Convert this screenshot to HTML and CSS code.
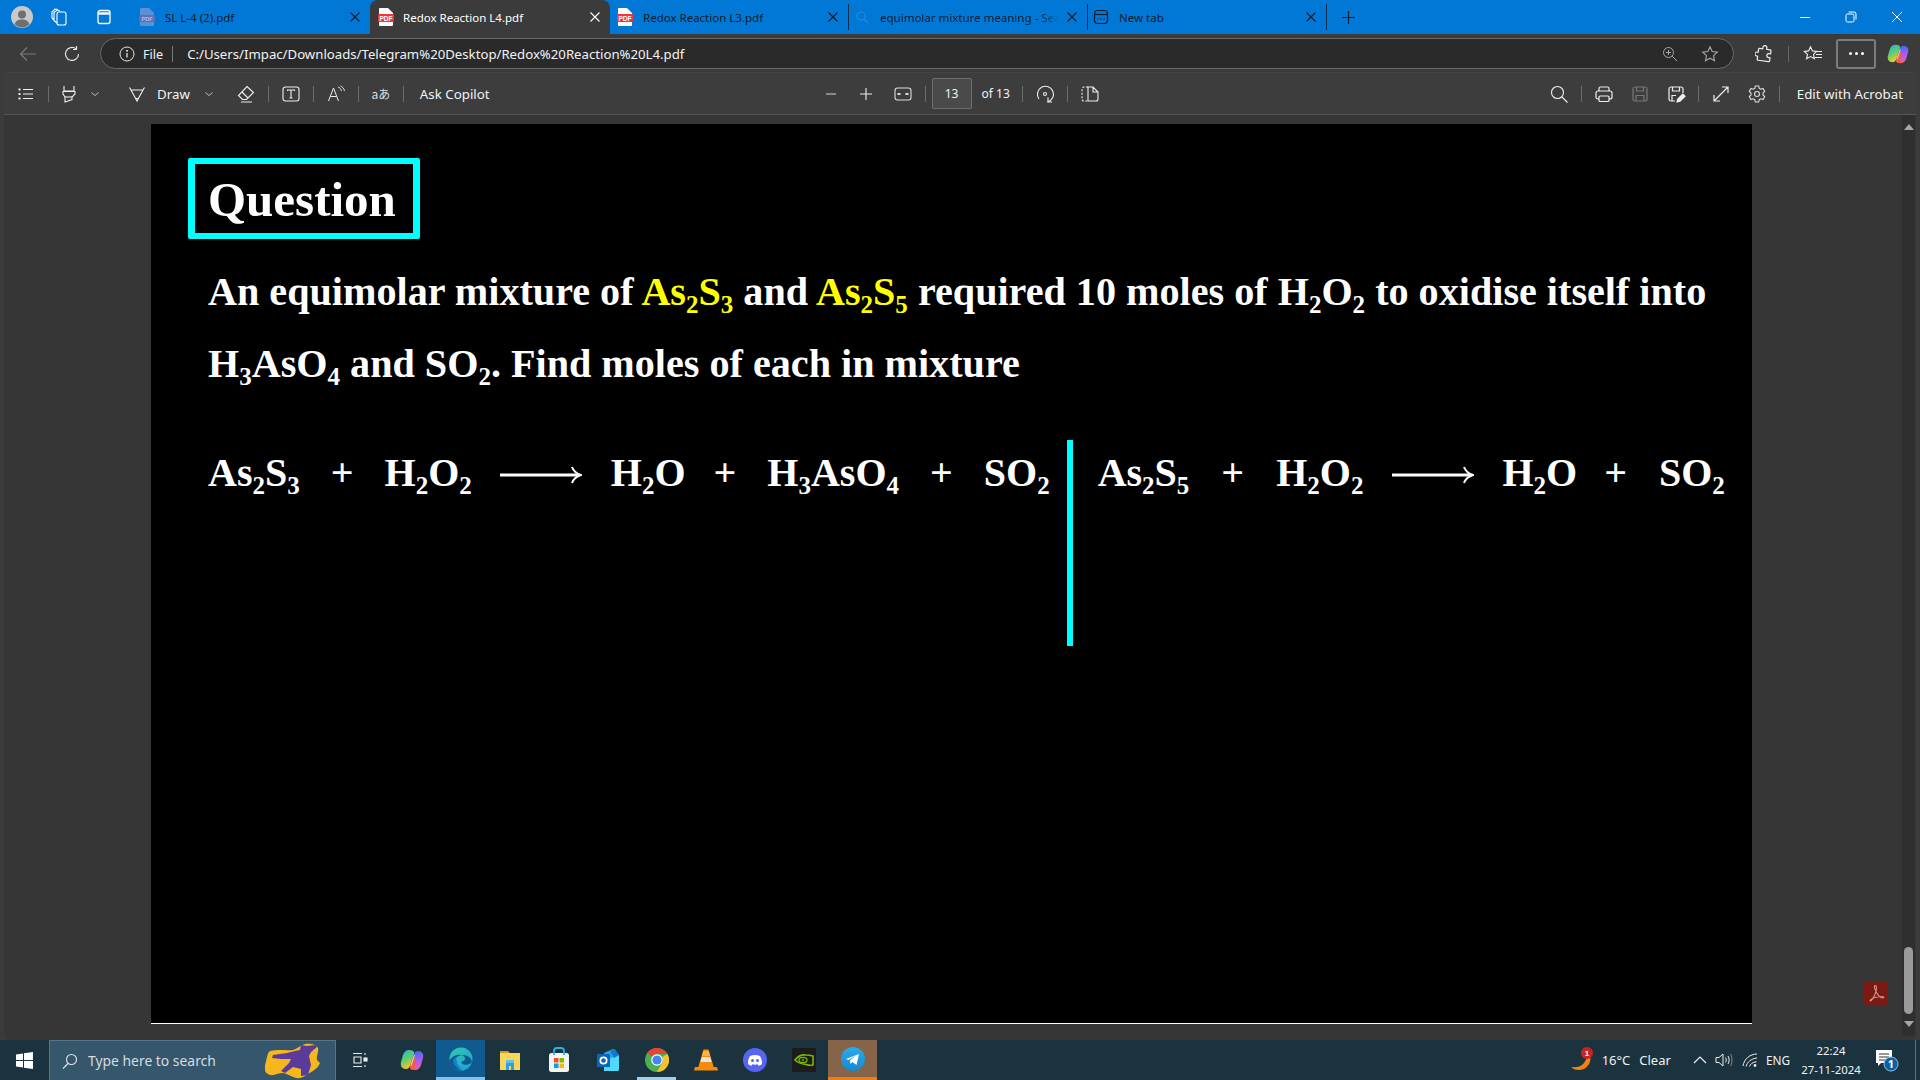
FILE: index.html
```html
<!DOCTYPE html>
<html lang="en">
<head>
<meta charset="utf-8">
<title>Redox Reaction L4.pdf</title>
<link rel="stylesheet" href="styles.css">
</head>
<body>
<svg class="defs" width="0" height="0">
  <defs>
    <symbol id="pdf" viewBox="0 0 16 18">
      <path d="M2 0h8l5 5v12a1 1 0 0 1-1 1H2a1 1 0 0 1-1-1V1a1 1 0 0 1 1-1z" fill="#fff"/>
      <rect x="0" y="6" width="16" height="8" rx="1" fill="#f0353b"/>
      <text x="8" y="12.6" text-anchor="middle" font-family="Liberation Sans" font-weight="700" font-size="6.6" fill="#fff">PDF</text>
    </symbol>
    <symbol id="x" viewBox="0 0 12 12"><path d="M1.5 1.5l9 9M10.5 1.5l-9 9" fill="none" stroke="currentColor" stroke-width="1.1"/></symbol>
    <symbol id="chev" viewBox="0 0 10 10"><path d="M1.5 3.5L5 6.5l3.5-3" fill="none" stroke="currentColor" stroke-width="1"/></symbol>
    <linearGradient id="cg1" x1="0" y1="0" x2=".4" y2="1"><stop offset="0" stop-color="#2aa8f0"/><stop offset=".55" stop-color="#5fd06a"/><stop offset="1" stop-color="#f5c52e"/></linearGradient>
    <linearGradient id="cg2" x1=".4" y1="0" x2=".6" y2="1"><stop offset="0" stop-color="#2f6ff0"/><stop offset=".5" stop-color="#a85cf0"/><stop offset="1" stop-color="#f060a0"/></linearGradient>
    <symbol id="copi" viewBox="0 0 24 24">
      <path d="M9 2C6 2 4 4 3 7l-2 7c-1 4 1 7 5 7 2 0 3-1 4-3l4-12c1-3-2-4-5-4z" fill="url(#cg1)"/>
      <path d="M15 22c3 0 5-2 6-5l2-7c1-4-1-7-5-7-2 0-3 1-4 3l-4 12c-1 3 2 4 5 4z" fill="url(#cg2)"/>
      <path d="M14 9c-2 3-3 6-4 9-1 3 2 4 5 4 1 0 2-.3 3-1-3 0-4-1-3.500-3.500L16 11z" fill="#f2603a"/>
      <path d="M14.500 7L11 17.500" stroke="#fff" stroke-opacity=".75" stroke-width="1"/>
    </symbol>
  </defs>
</svg>

<div class="tabstrip">
  <div class="strip-left">
    <svg class="avatar" width="22" height="22" viewBox="0 0 22 22"><circle cx="11" cy="11" r="11" fill="#c9c9c9"/><circle cx="11" cy="8.4" r="4" fill="#6f6f6f"/><path d="M3.600 18.600c1-4 4-5.200 7.400-5.200s6.400 1.200 7.400 5.200A11 11 0 0 1 3.600 18.600z" fill="#6f6f6f"/></svg>
    <svg class="strip-ic1" width="20" height="20" viewBox="0 0 20 20" fill="none" stroke="#fff" stroke-width="1.1"><rect x="8" y="5" width="9" height="13" rx="2"/><path d="M8 16l-3-2.500V5.500l3-2.500 3 1M5 13l-2-2V5l3-3 3 .5"/></svg>
    <svg class="strip-ic2" width="18" height="18" viewBox="0 0 18 18" fill="none" stroke="#fff" stroke-width="1.300"><rect x="3" y="2.500" width="12" height="13" rx="2"/><path d="M3 5.500h12" stroke-width="2.400"/></svg>
  </div>
  <div class="tab">
    <svg class="tab-icon" width="16" height="18" viewBox="0 0 16 18"><path d="M2 0h8l5 5v12a1 1 0 0 1-1 1H2a1 1 0 0 1-1-1V1a1 1 0 0 1 1-1z" fill="#5b8fd6"/><rect x="0" y="7" width="16" height="7" rx="1" fill="#5c6fb8"/><text x="8" y="12.500" text-anchor="middle" font-family="Liberation Sans" font-size="5.600" font-weight="700" fill="#a9c4ee">PDF</text></svg>
    <span class="tab-title">SL L-4 (2).pdf</span>
    <svg class="tab-x" width="12" height="12"><use href="#x"/></svg>
  </div>
  <div class="tab active">
    <svg class="tab-icon" width="16" height="18"><use href="#pdf"/></svg>
    <span class="tab-title">Redox Reaction L4.pdf</span>
    <svg class="tab-x" width="12" height="12"><use href="#x"/></svg>
  </div>
  <div class="tab">
    <svg class="tab-icon" width="16" height="18"><use href="#pdf"/></svg>
    <span class="tab-title">Redox Reaction L3.pdf</span>
    <svg class="tab-x" width="12" height="12"><use href="#x"/></svg>
  </div>
  <div class="tab sep-left">
    <svg class="tab-icon" width="16" height="16" viewBox="0 0 16 16" fill="none" stroke="#2a86d8" stroke-width="1.200"><circle cx="7" cy="7" r="4"/><path d="M10 10l4 4"/></svg>
    <span class="tab-title fade">equimolar mixture meaning - Sea</span>
    <svg class="tab-x" width="12" height="12"><use href="#x"/></svg>
  </div>
  <div class="tab sep-left">
    <svg class="tab-icon" width="16" height="16" viewBox="0 0 16 16" fill="none" stroke="#0b1c2c" stroke-width="1.200"><rect x="1.500" y="1.500" width="13" height="13" rx="3"/><path d="M1.500 5.500h13"/><path d="M4.500 10h1M7.500 10h1M10.500 10h1" stroke-width="1.600"/></svg>
    <span class="tab-title">New tab</span>
    <svg class="tab-x" width="12" height="12"><use href="#x"/></svg>
  </div>
  <div class="tab-new sep-left">
    <svg width="15" height="15" viewBox="0 0 15 15"><path d="M7.500 1v13M1 7.500h13" stroke="#0b1c2c" stroke-width="1.100"/></svg>
  </div>
  <div class="winctl">
    <svg width="12" height="12" viewBox="0 0 12 12"><path d="M1 6.500h10" stroke="#fff" stroke-width="1"/></svg>
    <svg width="12" height="12" viewBox="0 0 12 12" fill="none" stroke="#fff"><rect x="1" y="3" width="8" height="8" rx="1.500"/><path d="M3.500 1h5.500a2 2 0 0 1 2 2v5.500"/></svg>
    <svg width="12" height="12" viewBox="0 0 12 12"><path d="M1 1l10 10M11 1L1 11" stroke="#fff" stroke-width="1"/></svg>
  </div>
</div>

<div class="addrrow">
  <svg class="nav-back" width="18" height="16" viewBox="0 0 18 16" fill="none" stroke="#7b7b7b" stroke-width="1.200"><path d="M17 8H1.500M8 1.500L1.500 8 8 14.500"/></svg>
  <svg class="nav-reload" width="18" height="18" viewBox="0 0 18 18" fill="none" stroke="#e4e4e4" stroke-width="1.200"><path d="M15.500 9a6.500 6.500 0 1 1-2.400-5.100"/><path d="M13.500 1v3.500H10"/></svg>
  <div class="addrbar">
    <svg class="addr-info" width="16" height="16" viewBox="0 0 16 16" fill="none" stroke="#e4e4e4" stroke-width="1"><circle cx="8" cy="8" r="7"/><path d="M8 7v4.500" stroke-width="1.300"/><circle cx="8" cy="4.800" r=".6" fill="#e4e4e4"/></svg>
    <span class="addr-file">File</span>
    <i class="addr-sep"></i>
    <span class="addr-url">C:/Users/Impac/Downloads/Telegram%20Desktop/Redox%20Reaction%20L4.pdf</span>
    <svg class="addr-zoom" width="16" height="16" viewBox="0 0 16 16" fill="none" stroke="#a8a8a8" stroke-width="1"><circle cx="6.500" cy="6.500" r="5"/><path d="M10.200 10.200l5 5M4 6.500h5M6.500 4v5"/></svg>
    <svg class="addr-star" width="18" height="18" viewBox="0 0 18 18" fill="none" stroke="#a8a8a8" stroke-width="1.100"><path d="M9 1.800l2.200 4.700 5.100.6-3.800 3.500 1 5.100L9 13.200l-4.500 2.500 1-5.100L1.700 7.100l5.100-.6z"/></svg>
  </div>
  <svg class="ext" width="18" height="18" viewBox="0 0 18 18" fill="none" stroke="#eee" stroke-width="1.200"><path d="M7 2.500a2 2 0 0 1 4 0V4h3.500a1 1 0 0 1 1 1v3H14a2 2 0 0 0 0 4h1.500v3a1 1 0 0 1-1 1H4a1 1 0 0 1-1-1v-3H2a2 2 0 0 1 0-4h1V5a1 1 0 0 1 1-1h3z" transform="rotate(8 9 9)"/></svg>
  <i class="row-sep"></i>
  <svg class="favs" width="20" height="18" viewBox="0 0 20 18" fill="none" stroke="#eee" stroke-width="1.100"><path d="M7.500 1.800l1.900 4.100 4.300.5-3.200 3 .9 4.400-3.900-2.200-3.900 2.200.9-4.400-3.200-3 4.300-.5zM14 6.500h5M13 9.500h6M12 12.500h7"/></svg>
  <div class="morebtn"><span></span><span></span><span></span></div>
  <svg class="copilot-top" width="22" height="22"><use href="#copi"/></svg>
</div>

<div class="toolbar">
  <div class="tb-group">
    <svg class="ic tb-first" width="20" height="20" viewBox="0 0 20 20" fill="none" stroke="#eee" stroke-width="1.100"><path d="M7 5.500h10M7 10h10M7 14.500h10"/><path d="M2.500 5.500h2M2.500 10h2M2.500 14.500h2" stroke-width="1.800"/></svg>
    <i class="sep sep-hl"></i>
    <svg class="ic" width="20" height="20" viewBox="0 0 20 20" fill="none" stroke="#eee" stroke-width="1.100"><path d="M5 2v5h10V2M4 7.500h12v2.500L13 13v2.500L6 18v-5l-2-3z"/><path d="M6 13h7"/></svg>
    <svg class="chv chv-hl" width="10" height="10"><use href="#chev"/></svg>
    <svg class="ic ic-draw" width="20" height="20" viewBox="0 0 20 20" fill="none" stroke="#eee" stroke-width="1.100"><path d="M2.500 3.500l1.500 2.500h12l1.500-2.500M4 6l6 11 6-11M9 14.500h2"/></svg>
    <span class="tb-text tb-draw">Draw</span>
    <svg class="chv chv-draw" width="10" height="10"><use href="#chev"/></svg>
    <svg class="ic ic-erase" width="20" height="20" viewBox="0 0 20 20" fill="none" stroke="#eee" stroke-width="1.100"><path d="M11 2.500l6.500 6-7 7H6.500l-4-4zM6 8l6 6M5 18h11"/></svg>
    <i class="sep"></i>
    <svg class="ic" width="20" height="20" viewBox="0 0 20 20" fill="none" stroke="#eee" stroke-width="1.100"><rect x="2" y="3" width="16" height="14" rx="2.500"/><path d="M6.500 7V6h7v1M10 6v8M8.500 14h3"/></svg>
    <i class="sep"></i>
    <svg class="ic" width="20" height="20" viewBox="0 0 20 20" fill="none" stroke="#eee" stroke-width="1"><path d="M2.500 17L7.500 4l5 13M4.500 12.500h6"/><path d="M12 3c2 .5 3 2 3.500 4M14.500 2c2 .8 3.500 2.500 4 5" stroke-width=".9"/></svg>
    <i class="sep"></i>
    <span class="ic tb-trans">aあ</span>
    <i class="sep"></i>
    <span class="tb-text tb-ask">Ask Copilot</span>
  </div>
  <div class="tb-group tb-center">
    <svg class="ic" width="20" height="20" viewBox="0 0 20 20"><path d="M5 10h10" stroke="#a9a9a9" stroke-width="1.400"/></svg>
    <svg class="ic ic-plus" width="20" height="20" viewBox="0 0 20 20"><path d="M4 10h12M10 4v12" stroke="#eee" stroke-width="1.100"/></svg>
    <svg class="ic ic-fit" width="20" height="20" viewBox="0 0 20 20" fill="none" stroke="#ddd" stroke-width="1.100"><rect x="2" y="4" width="16" height="12" rx="2.500"/><path d="M4.500 10h3M12.500 10h3" stroke-width="2.200"/></svg>
    <i class="sep sep-tight"></i>
    <div class="pagebox">13</div>
    <span class="tb-text tb-of">of 13</span>
    <i class="sep"></i>
    <svg class="ic" width="20" height="20" viewBox="0 0 20 20" fill="none" stroke="#eee" stroke-width="1.100"><path d="M12.500 18a8 8 0 1 0-8.500-3"/><circle cx="10" cy="10" r="1.500"/><path d="M13 13.500v4.500h4"/></svg>
    <i class="sep"></i>
    <svg class="ic" width="20" height="20" viewBox="0 0 20 20" fill="none" stroke="#eee" stroke-width="1.100"><path d="M8 3H4a2 2 0 0 0-2 2v10a2 2 0 0 0 2 2h4" stroke-dasharray="2 1.500"/><path d="M8 3h5l5 5v7a2 2 0 0 1-2 2H8zM13 3v5h5"/></svg>
  </div>
  <div class="tb-group tb-right">
    <svg class="ic" width="20" height="20" viewBox="0 0 20 20" fill="none" stroke="#eee" stroke-width="1.100"><circle cx="8.500" cy="8.500" r="6"/><path d="M13 13l5.500 5.500"/></svg>
    <i class="sep"></i>
    <svg class="ic" width="20" height="20" viewBox="0 0 20 20" fill="none" stroke="#eee" stroke-width="1.200"><path d="M5 7V4.500A1.500 1.500 0 0 1 6.500 3h7A1.500 1.500 0 0 1 15 4.500V7M5 15H4a2 2 0 0 1-2-2V9a2 2 0 0 1 2-2h12a2 2 0 0 1 2 2v4a2 2 0 0 1-2 2h-1"/><rect x="5" y="12" width="10" height="5.500" rx="1"/></svg>
    <svg class="ic ic-r16" width="20" height="20" viewBox="0 0 20 20" fill="none" stroke="#777" stroke-width="1.200"><rect x="3" y="3" width="14" height="14" rx="2"/><path d="M6.500 3v4h7V3M6 17v-5.500h8V17"/></svg>
    <svg class="ic ic-r16" width="20" height="20" viewBox="0 0 20 20" fill="none" stroke="#eee" stroke-width="1.200"><path d="M9 17H5a2 2 0 0 1-2-2V5a2 2 0 0 1 2-2h10a2 2 0 0 1 2 2v4M6.500 3v4h7V3M6 17v-5.500h4"/><path d="M11 18l.8-3 5-5 2.200 2.200-5 5z" fill="#eee"/></svg>
    <i class="sep"></i>
    <svg class="ic" width="20" height="20" viewBox="0 0 20 20" fill="none" stroke="#eee" stroke-width="1.200"><path d="M3 17L17 3M11 3h6v6M3 11v6h6"/></svg>
    <svg class="ic ic-r16" width="20" height="20" viewBox="0 0 20 20" fill="none" stroke="#ddd" stroke-width="1.100"><path d="M8.300 2h3.400l.5 2.300 1.600.9 2.200-.7 1.700 3-1.700 1.500v2l1.700 1.500-1.700 3-2.200-.7-1.600.9-.5 2.300H8.300l-.5-2.300-1.600-.9-2.200.7-1.700-3L4 11V9L2.300 7.500l1.700-3 2.200.7 1.600-.9z"/><circle cx="10" cy="10" r="2.500"/></svg>
    <i class="sep"></i>
    <span class="tb-text tb-edit">Edit with Acrobat</span>
  </div>
</div>

<main class="viewer">
  <section class="slide">
    <h1 class="q-box">Question</h1>
    <p class="q-text">An equimolar mixture of <span class="hl">As<sub>2</sub>S<sub>3</sub></span> and <span class="hl">As<sub>2</sub>S<sub>5</sub></span> required 10 moles of H<sub>2</sub>O<sub>2</sub> to oxidise itself into<br>H<sub>3</sub>AsO<sub>4</sub> and SO<sub>2</sub>. Find moles of each in mixture</p>
    <div class="eqs">
      <div class="eq eq-left">
        <span>As<sub>2</sub>S<sub>3</sub></span><span>+</span><span>H<sub>2</sub>O<sub>2</sub></span>
        <svg class="arrow" width="82" height="22" viewBox="0 0 82 22" fill="none" stroke="#fff"><path d="M0 11h79" stroke-width="3"/><path d="M72 3c1.500 4 4 6.500 9 8-5 1.500-7.500 4-9 8" stroke-width="2"/></svg>
        <span class="narrow">H<sub>2</sub>O</span><span>+</span><span>H<sub>3</sub>AsO<sub>4</sub></span><span>+</span><span>SO<sub>2</sub></span>
      </div>
      <div class="eq-bar"></div>
      <div class="eq eq-right">
        <span>As<sub>2</sub>S<sub>5</sub></span><span>+</span><span>H<sub>2</sub>O<sub>2</sub></span>
        <svg class="arrow" width="82" height="22" viewBox="0 0 82 22" fill="none" stroke="#fff"><path d="M0 11h79" stroke-width="3"/><path d="M72 3c1.500 4 4 6.500 9 8-5 1.500-7.500 4-9 8" stroke-width="2"/></svg>
        <span class="narrow">H<sub>2</sub>O</span><span>+</span><span>SO<sub>2</sub></span>
      </div>
    </div>
  </section>
  <div class="scrollbar">
    <svg class="sb-up" width="10" height="6" viewBox="0 0 10 6"><path d="M5 0l5 6H0z" fill="#a5a5a5"/></svg>
    <div class="sb-thumb"></div>
    <svg class="sb-down" width="10" height="6" viewBox="0 0 10 6"><path d="M0 0h10L5 6z" fill="#a5a5a5"/></svg>
  </div>
  <div class="acro-badge">
    <svg width="18" height="18" viewBox="0 0 18 18" fill="none" stroke="#c79a94" stroke-width="1.100"><path d="M8 1.500c-1 0-1 2 1 6s4 6.500 7 6.500c1 0 1-1.500-.5-1.500-4 0-9 1-11.500 3-1.500 1.200-1 1.800 0 1.200 2.500-1.700 5.500-9 5.500-13 0-1.500-.5-2.200-1.500-2.200z"/></svg>
  </div>
</main>

<footer class="taskbar">
  <button class="start" aria-label="Start">
    <svg width="17" height="17" viewBox="0 0 17 17" fill="#fff"><path d="M0 2.500l7-1V8H0zM8 1.300L17 0v8H8zM0 9h7v6.500l-7-1zM8 9h9v8l-9-1.300z"/></svg>
  </button>
  <div class="search">
    <svg width="16" height="16" viewBox="0 0 16 16" fill="none" stroke="#e2e7ea" stroke-width="1.100"><circle cx="9.500" cy="6.500" r="5"/><path d="M6 10.500L1 15.500"/></svg>
    <span class="search-text">Type here to search</span>
    <svg class="doodle" width="56" height="36" viewBox="0 0 56 36">
      <path d="M0 22C2 16 2 10 5 8c8-2 16 0 23-1 4-1 8-5 12-6 5-1 11 0 13 4 1 4-2 8-1 12l3 3c-1 3-4 6-7 8-4 2-8 6-13 7-6 1-11-4-17-5-5 0-9 3-13 2-3-1-5-3-5-5z" fill="#f5b71e"/>
      <path d="M36 2l6 1 8-1 2 2-6 5-2 4 2 9-3 10-7 1v-7l-8-2-8 6-4-2 8-8 2-4H16l-9-1 1-3 14-2 8-2 5-1z" fill="#5a3a9a"/>
    </svg>
  </div>
  <div class="tb-task">
    <svg width="16" height="18" viewBox="0 0 16 18" fill="none" stroke="#eee" stroke-width="1.100"><path d="M1 2.500h9M1 15.500h9M2 6h7v6H2zM13 2v2M13 14v2"/><rect x="12" y="7" width="3" height="3" fill="#eee"/></svg>
  </div>
  <div class="tapp">
    <svg width="24" height="24"><use href="#copi"/></svg>
  </div>
  <div class="tapp edge">
    <svg width="24" height="24" viewBox="0 0 24 24"><defs><linearGradient id="eg" x1="0" y1="0" x2="1" y2="1"><stop offset="0" stop-color="#36c9a8"/><stop offset="1" stop-color="#1aa0e0"/></linearGradient></defs><circle cx="12" cy="12" r="11.500" fill="url(#eg)"/><path d="M23 15c-1-5-5-7-9-7-5 0-8 3-8 7 0 4 3 7 7 8-6 1-12-3-12.500-10C1 13 3 9 8 8c4-1 7 0 8 3 .5 1.500-.5 3-2 3-2.500.5-2 3 1 3.500 3 .5 6 0 8-2.500z" fill="#0f5a8f"/><path d="M8 14c0 4 3 7 6 7-5 1-10-2-10-8 1-2 3-3 4-3-1 1-1 2.500 0 4z" fill="#1580d0"/></svg>
  </div>
  <div class="tapp">
    <svg width="24" height="24" viewBox="0 0 24 24"><path d="M2 3h8l2 2h10v2H2z" fill="#d99a1c"/><rect x="2" y="5" width="20" height="17" fill="#f9d65c"/><path d="M8 13a1 1 0 0 1 1-1h6a1 1 0 0 1 1 1v9h-3v-4h-2v4H8z" fill="#2f9de0"/><rect x="8" y="12" width="8" height="3" fill="#5cc0f0"/></svg>
  </div>
  <div class="tapp">
    <svg width="24" height="26" viewBox="0 0 24 26"><rect x="2" y="6" width="20" height="19" rx="2.500" fill="#f4f4f4"/><path d="M7 8V4a3 3 0 0 1 3-3h4a3 3 0 0 1 3 3v4" fill="none" stroke="#2bb0e8" stroke-width="1.800"/><rect x="7" y="11" width="4.500" height="4.500" fill="#f25022"/><rect x="12.500" y="11" width="4.500" height="4.500" fill="#7fba00"/><rect x="7" y="16.500" width="4.500" height="4.500" fill="#00a4ef"/><rect x="12.500" y="16.500" width="4.500" height="4.500" fill="#ffb900"/></svg>
  </div>
  <div class="tapp">
    <svg width="24" height="24" viewBox="0 0 24 24"><path d="M8 5l9-4 6 6v14a2 2 0 0 1-2 2H8z" fill="#28a8ea"/><path d="M8 13l15-6v14a2 2 0 0 1-2 2H8z" fill="#50d9ff"/><path d="M14 3l5-2 4 6-5 3z" fill="#0f78d4"/><rect x="1" y="6" width="13" height="13" fill="#0a64b8"/><circle cx="7.500" cy="12.500" r="3.200" fill="none" stroke="#fff" stroke-width="1.700"/></svg>
  </div>
  <div class="tapp active-line">
    <svg width="24" height="24" viewBox="0 0 24 24"><circle cx="12" cy="12" r="12" fill="#4caf50"/><path d="M12 0a12 12 0 0 1 10.400 6H12a6 6 0 0 0-5.200 3L2.500 4.500A12 12 0 0 1 12 0z" fill="#ea4335"/><path d="M22.400 6A12 12 0 0 1 12 24l5.200-9a6 6 0 0 0 0-6z" fill="#fbc02d"/><circle cx="12" cy="12" r="5.800" fill="#fff"/><circle cx="12" cy="12" r="4.600" fill="#4285f4"/></svg>
  </div>
  <div class="tapp">
    <svg width="24" height="24" viewBox="0 0 24 24"><path d="M9.500 1.500h5L20 20h-16z" fill="#f58a0b"/><path d="M7.800 9h8.400l1.300 5H6.500z" fill="#e8e3dc"/><path d="M9.200 3h5.600L16 8H8z" fill="#f9b24b"/><path d="M1 19h22l1 3.500H0z" fill="#f58a0b"/></svg>
  </div>
  <div class="tapp">
    <svg width="24" height="24" viewBox="0 0 24 24"><circle cx="12" cy="12" r="12" fill="#5865f2"/><path d="M7 8c3-1.500 7-1.500 10 0 1.500 2.500 2.200 5 2 8-1.200 1-2.500 1.500-3.500 1.800l-.8-1.500c-2 .6-3.400.6-5.400 0l-.8 1.500C8 17.500 6.200 17 5 16c-.2-3 .5-5.500 2-8z" fill="#fff"/><circle cx="9.500" cy="12.500" r="1.500" fill="#5865f2"/><circle cx="14.500" cy="12.500" r="1.500" fill="#5865f2"/></svg>
  </div>
  <div class="tapp">
    <svg width="24" height="24" viewBox="0 0 24 24"><rect width="24" height="24" fill="#1c1c1c"/><path d="M3 12c3-4 7-5.500 11-5 3 0 5 .5 7 1v9c-2 .5-4 .5-7-.5-4-.5-8-1.500-11-4.500z" fill="none" stroke="#76b900" stroke-width="1.600"/><ellipse cx="11" cy="12" rx="4" ry="2.600" fill="none" stroke="#76b900" stroke-width="1.300"/><circle cx="11" cy="12" r="1" fill="#76b900"/></svg>
  </div>
  <div class="tapp telegram">
    <svg width="24" height="24" viewBox="0 0 24 24"><defs><linearGradient id="tg" x1="0" y1="0" x2="0" y2="1"><stop offset="0" stop-color="#2aabee"/><stop offset="1" stop-color="#1689c9"/></linearGradient></defs><circle cx="12" cy="12" r="12" fill="url(#tg)"/><path d="M5 12l13-5-2.500 11-4-3-2 2-.5-3.500 6-5-7.500 4.500z" fill="#fff"/></svg>
  </div>
  <div class="tray">
    <svg class="t-weather" width="24" height="28" viewBox="0 0 24 28"><defs><linearGradient id="wg" x1="0" y1="0" x2="1" y2="1"><stop offset="0" stop-color="#fdb827"/><stop offset="1" stop-color="#e96a12"/></linearGradient></defs><path d="M19 8c3 5 1 12-5 15-5 2-10 1-13-2 5 1 10 0 13-4 2-3 3-6 5-9z" fill="url(#wg)"/><circle cx="17" cy="7" r="6" fill="#c8251f"/><text x="17" y="10" text-anchor="middle" font-family="Liberation Sans" font-size="8" font-weight="700" fill="#fff">1</text></svg>
    <span class="t-temp">16°C</span>
    <span class="t-clear">Clear</span>
    <svg class="t-chev" width="14" height="10" viewBox="0 0 14 10" fill="none" stroke="#eee" stroke-width="1.200"><path d="M1 8l6-6 6 6"/></svg>
    <svg class="t-vol" width="18" height="16" viewBox="0 0 18 16" fill="none" stroke="#eee" stroke-width="1"><path d="M1 5.500h3L8 2v12l-4-3.500H1zM10.500 5.500c1 1.500 1 3.500 0 5M13 4c1.500 2.500 1.500 5.500 0 8"/><path d="M15.500 2c2 3.500 2 8.500 0 12" stroke="#888"/></svg>
    <svg class="t-wifi" width="16" height="16" viewBox="0 0 16 16" fill="none" stroke="#eee" stroke-width="1"><path d="M1 14C2 7 8 2 15 2M4 14.500c1-4 5-8 11-8.500M7.500 14.500c.5-2 3-4.500 7-4.800"/><circle cx="13" cy="13.500" r="1.400" fill="#eee" stroke="none"/></svg>
    <span class="t-eng">ENG</span>
    <div class="t-clock"><span>22:24</span><span>27-11-2024</span></div>
    <svg class="t-note" width="26" height="26" viewBox="0 0 26 26"><path d="M2 3h16v13H7l-3 3v-3H2z" fill="#fff"/><path d="M5 7h10M5 10h10M5 13h7" stroke="#333" stroke-width="1"/><circle cx="17" cy="17" r="7" fill="#0f5f9c" stroke="#8fbfe0" stroke-width="1"/><text x="17" y="21" text-anchor="middle" font-family="Noto Sans" font-size="11" font-weight="700" fill="#fff">1</text></svg>
    <i class="t-desk"></i>
  </div>
</footer>
</body>
</html>
```

FILE: styles.css
```css
* { box-sizing: border-box; }
html, body { margin: 0; height: 100%; }
body {
  width: 1920px; height: 1080px; overflow: hidden;
  display: flex; flex-direction: column;
  background: #3b3b3b; color: #fff;
  font-family: "Noto Sans", "Liberation Sans", sans-serif;
  font-size: 12px;
}
.defs { position: absolute; }
svg { flex: none; display: block; }

/* tab strip */
.tabstrip { height: 34px; flex: none; display: flex; align-items: stretch; background: #0278d6; color: #0b1c2c; }
.strip-left { width: 132px; display: flex; align-items: center; padding-left: 11px; }
.strip-ic1 { margin-left: 16px; }
.strip-ic2 { margin-left: 26px; }
.tab { width: 238px; display: flex; align-items: center; padding-left: 6px; position: relative; border-left: 1px solid transparent; }
.tab:first-of-type { border-left-color: #0b2e4c; }
.tab-icon { margin-right: 10px; }
.tab-title { flex: 1; min-width: 0; font-size: 11.5px; white-space: nowrap; overflow: hidden; }
.tab-x { margin-right: 9px; margin-left: 6px; color: #0b1c2c; }
.tab.active { width: 240px; padding-left: 8px; background: #3b3b3b; border-radius: 8px 8px 0 0; color: #fff; border-left: 0; }
.tab.active .tab-icon { margin-right: 9px; }
.tab.active .tab-x { color: #fff; }
.tab.sep-left { border-left: 0; width: 239px; }
.sep-left::before { content: ""; position: absolute; left: 0; top: 4px; bottom: 4px; width: 1px; background: #0b2e4c; }
.fade { mask-image: linear-gradient(to right, #000 88%, transparent); -webkit-mask-image: linear-gradient(to right, #000 88%, transparent); }
.tab-new { width: 44px; display: flex; align-items: center; justify-content: center; position: relative; }
.winctl { margin-left: auto; display: flex; align-items: center; gap: 34px; padding-right: 17px; }

/* address row */
.addrrow { height: 39px; flex: none; display: flex; align-items: center; background: #3b3b3b; }
.nav-back { margin-left: 19px; }
.nav-reload { margin-left: 26px; }
.addrbar { margin-left: 19px; width: 1634px; height: 31px; background: #2a2a2a; border: 1px solid #686868; border-radius: 16px; display: flex; align-items: center; padding-left: 18px; color: #f2f2f2; }
.addr-file { margin-left: 8px; padding-top: 1px; font-size: 12.6px; }
.addr-sep { width: 1px; height: 16px; background: #777; margin-left: 9px; }
.addr-url { margin-left: 14px; padding-top: 1px; font-size: 13.2px; white-space: nowrap; }
.addr-zoom { margin-left: auto; }
.addr-star { margin-left: 23px; margin-right: 14px; }
.ext { margin-left: 21px; }
.row-sep { width: 1px; height: 16px; background: #666; margin-left: 15px; }
.favs { margin-left: 14px; }
.morebtn { margin-left: 13px; width: 40px; height: 30px; border: 2px solid #7d7d7d; border-radius: 3px; display: flex; align-items: center; justify-content: center; gap: 3px; }
.morebtn span { width: 3px; height: 3px; background: #fff; border-radius: 50%; }
.copilot-top { margin-left: 11px; }

/* toolbar */
.toolbar { height: 42px; flex: none; margin: 0 4px; display: flex; align-items: center; background: #3d3d3d; border-bottom: 1px solid #565656; border-radius: 6px 6px 0 0; color: #f2f2f2; box-shadow: 0 -1px 0 #444; }
.tb-group { display: flex; align-items: center; }
.ic { width: 20px; }
.tb-first { margin-left: 12px; }
.sep { width: 1px; height: 16px; background: #6c6c6c; margin: 0 12px; flex: none; }
.sep-hl { margin-right: 10px; }
.chv { margin-left: 11px; color: #bdbdbd; }
.chv-draw { margin-left: 14px; }
.ic-draw { margin-left: 27px; }
.tb-text { font-size: 13.3px; white-space: nowrap; }
.tb-draw { margin-left: 10px; }
.ic-erase { margin-left: 22px; }
.tb-trans { font-family: "Noto Sans CJK JP", "Noto Sans", sans-serif; font-size: 12px; text-align: center; white-space: nowrap; color: #ddd; }
.tb-ask { margin-left: 4px; }
.tb-center { margin-left: 331px; }
.ic-plus { margin-left: 15px; }
.ic-fit { margin-left: 17px; }
.sep-tight { margin-right: 6px; }
.pagebox { width: 40px; height: 31px; background: #4a4a4a; border: 1px solid #6e6e6e; border-radius: 2px; display: flex; align-items: center; justify-content: center; font-size: 12px; }
.tb-of { margin-left: 10px; font-size: 12px; }
.tb-right { margin-left: auto; padding-right: 13px; }
.ic-r16 { margin-left: 16px; }
.tb-edit { margin-left: 5px; }

/* viewer */
.viewer { height: 925px; flex: none; margin: 0 4px; padding: 9px 0 0 147px; background: #363636; position: relative; overflow: hidden; border-radius: 0 0 6px 6px; }
.slide { width: 1601px; height: 900px; background: #000; border-bottom: 1px solid #fff; padding: 34px 0 0 37px; font-family: "Liberation Serif", serif; font-weight: 700; }
.q-box { width: 232px; height: 81px; margin: 0; border: solid #00ffff; border-width: 6px 7px; border-radius: 2px; padding: 2px 0 0 13px; font-size: 49px; line-height: 68px; font-weight: 700; white-space: nowrap; }
.q-text { margin: 17px 0 0 20px; font-size: 40.15px; line-height: 72px; white-space: nowrap; }
.hl { color: #ffff00; }
sub { font-size: 25px; line-height: 0; vertical-align: -8px; }
.eqs { margin: 40px 0 0 20px; display: flex; align-items: flex-start; font-size: 40px; line-height: 50px; }
.eq { display: flex; padding-top: 8px; white-space: nowrap; }
.eq-left { gap: 31px; }
.eq-right { gap: 32px; }
.eq-bar { width: 6px; height: 206px; background: #00ffff; margin: 0 25px 0 17px; }
.arrow { margin-top: 16px; }
.eq-left .arrow { margin-left: -3px; margin-right: -2px; }
.eq-right .arrow { margin-left: -3px; margin-right: -4px; }
.eq-left .narrow { margin-right: -3px; }
.eq-right .narrow { margin-right: -5px; }

.scrollbar { position: absolute; right: 1px; top: 0; bottom: 4px; width: 13px; background: #2f2f2f; display: flex; flex-direction: column; align-items: center; justify-content: flex-end; border-radius: 0 0 4px 4px; }
.sb-up { position: absolute; top: 9px; left: 2px; }
.sb-thumb { width: 9px; height: 67px; background: #9a9a9a; border-radius: 5px; margin-bottom: 7px; }
.sb-down { margin-bottom: 9px; }
.acro-badge { position: absolute; left: 1860px; top: 866px; width: 24px; height: 24px; background: #7a1a12; border-radius: 3px; display: flex; align-items: center; justify-content: center; }

/* taskbar */
.taskbar { height: 40px; flex: none; display: flex; align-items: stretch; background: #1b333e; color: #eef2f4; }
.start { width: 49px; padding: 0; background: none; border: 0; display: flex; align-items: center; justify-content: center; }
.search { width: 287px; display: flex; align-items: center; padding-left: 12px; background: #35566b; border: 1px solid #56768a; border-width: 1px 1px 0; }
.search-text { margin-left: 10px; font-size: 13.9px; color: #d4dce0; white-space: nowrap; }
.doodle { margin-left: auto; margin-right: 14px; }
.tb-task { width: 51px; padding-right: 4px; display: flex; align-items: center; justify-content: center; }
.tapp { width: 49px; display: flex; align-items: center; justify-content: center; position: relative; }
.edge { background: #0f5a8f; border-bottom: 3px solid #86c0e6; }
.active-line::after { content: ""; position: absolute; left: 5px; right: 5px; bottom: 0; height: 3px; background: #a3cde8; }
.telegram { background: #86644a; border-bottom: 3px solid #f47a0e; }
.tray { margin-left: auto; display: flex; align-items: center; font-size: 13px; white-space: nowrap; }
.t-temp { margin-left: 8px; }
.t-clear { margin-left: 9px; }
.t-chev { margin-left: 22px; }
.t-vol { margin-left: 8px; }
.t-wifi { margin-left: 9px; }
.t-eng { margin-left: 8px; font-size: 11.8px; }
.t-clock { margin-left: 12px; width: 58px; display: flex; flex-direction: column; align-items: center; gap: 2px; font-size: 11.4px; line-height: 17px; }
.t-note { margin-left: 14px; }
.t-desk { margin-left: 15px; width: 5px; height: 40px; border-left: 1px solid #5b7581; }
```
